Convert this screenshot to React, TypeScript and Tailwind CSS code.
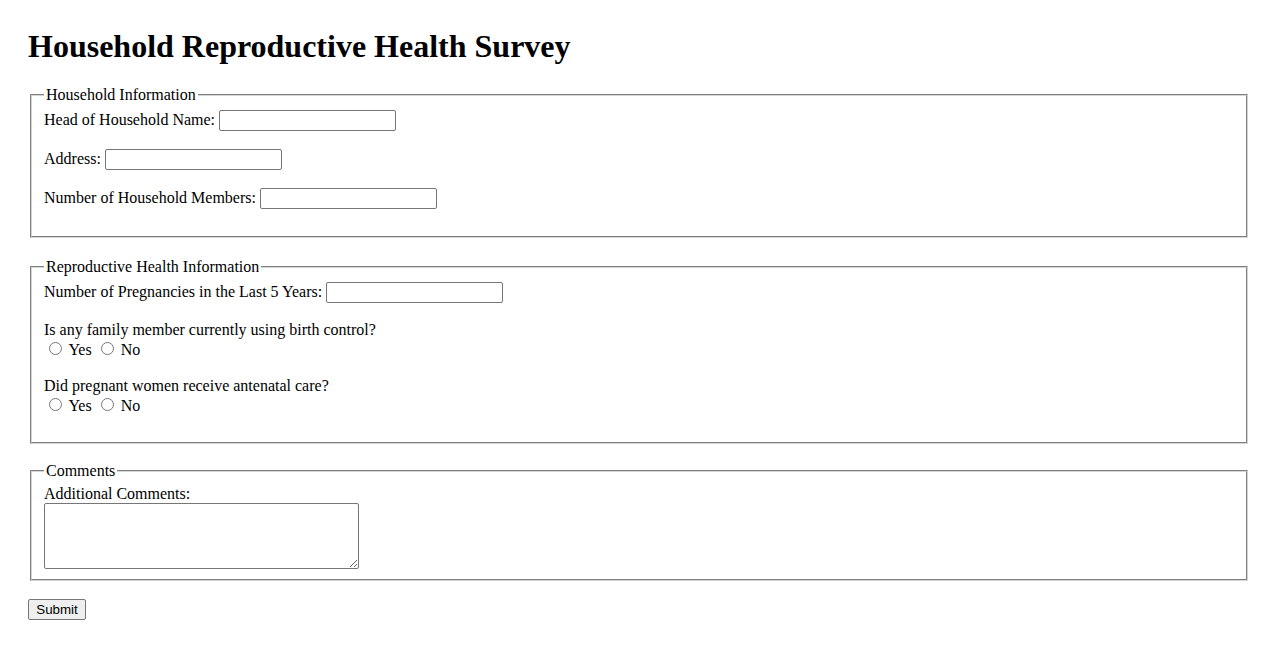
import React from "react";

const serif = "font-['Liberation_Serif','Times_New_Roman',serif]";
const fieldset =
  "mx-[2px] border-2 [border-style:groove] border-[#d4d4d4] px-[12px] pt-[5.6px] pb-[10px]";
const textInput =
  "w-[177px] h-[21px] border border-[#767676] rounded-[2px] px-[2px] py-[1px] bg-white align-baseline text-[13.33px] font-['Liberation_Sans',Arial,sans-serif]";
const radio = "w-[13px] h-[13px] mt-[3px] mr-[3px] ml-[5px] mb-0 align-baseline";

function TextRow({ id, label, last }: { id: string; label: string; last?: boolean }) {
  return (
    <div className={`h-[23px] ${last ? "mb-[15px]" : "mb-4"}`}>
      <label htmlFor={id}>{label}</label> <input id={id} type="text" className={textInput} />
    </div>
  );
}

function YesNo({ name, question, last }: { name: string; question: string; last?: boolean }) {
  return (
    <div className={last ? "mb-[17px]" : "mb-[18px]"}>
      <div>{question}</div>
      <div>
        <input type="radio" name={name} id={`${name}-yes`} className={radio} />{" "}
        <label htmlFor={`${name}-yes`}>Yes</label>{" "}
        <input type="radio" name={name} id={`${name}-no`} className={radio} />{" "}
        <label htmlFor={`${name}-no`}>No</label>
      </div>
    </div>
  );
}

export default function App() {
  return (
    <div className={`min-h-screen bg-white text-black text-[16px] leading-[normal] px-[28px] pt-[28px] ${serif}`}>
      <h1 className="text-[32px] font-bold mb-[21.44px]">Household Reproductive Health Survey</h1>

      <form onSubmit={(e) => e.preventDefault()}>
        <fieldset className={`${fieldset} mb-[20px]`}>
          <legend className="px-[2px]">Household Information</legend>
          <TextRow id="head" label="Head of Household Name:" />
          <TextRow id="address" label="Address:" />
          <TextRow id="members" label="Number of Household Members:" last />
        </fieldset>

        <fieldset className={`${fieldset} mb-[18px]`}>
          <legend className="px-[2px]">Reproductive Health Information</legend>
          <TextRow id="pregnancies" label="Number of Pregnancies in the Last 5 Years:" />
          <YesNo name="birth-control" question="Is any family member currently using birth control?" />
          <YesNo name="antenatal" question="Did pregnant women receive antenatal care?" last />
        </fieldset>

        <fieldset className={fieldset}>
          <legend className="px-[2px]">Comments</legend>
          <label htmlFor="comments">Additional Comments:</label>
          <textarea
            id="comments"
            className="block w-[315px] h-[66px] border border-[#767676] rounded-[2px] p-[2px] bg-white text-[13.33px] font-['Liberation_Mono',monospace]"
          />
        </fieldset>

        <button
          type="submit"
          className="mt-[18px] w-[58px] h-[21px] px-[6px] border border-[#767676] rounded-[2px] bg-[#efefef] text-[13.33px] leading-none font-['Liberation_Sans',Arial,sans-serif]"
        >
          Submit
        </button>
      </form>
    </div>
  );
}
